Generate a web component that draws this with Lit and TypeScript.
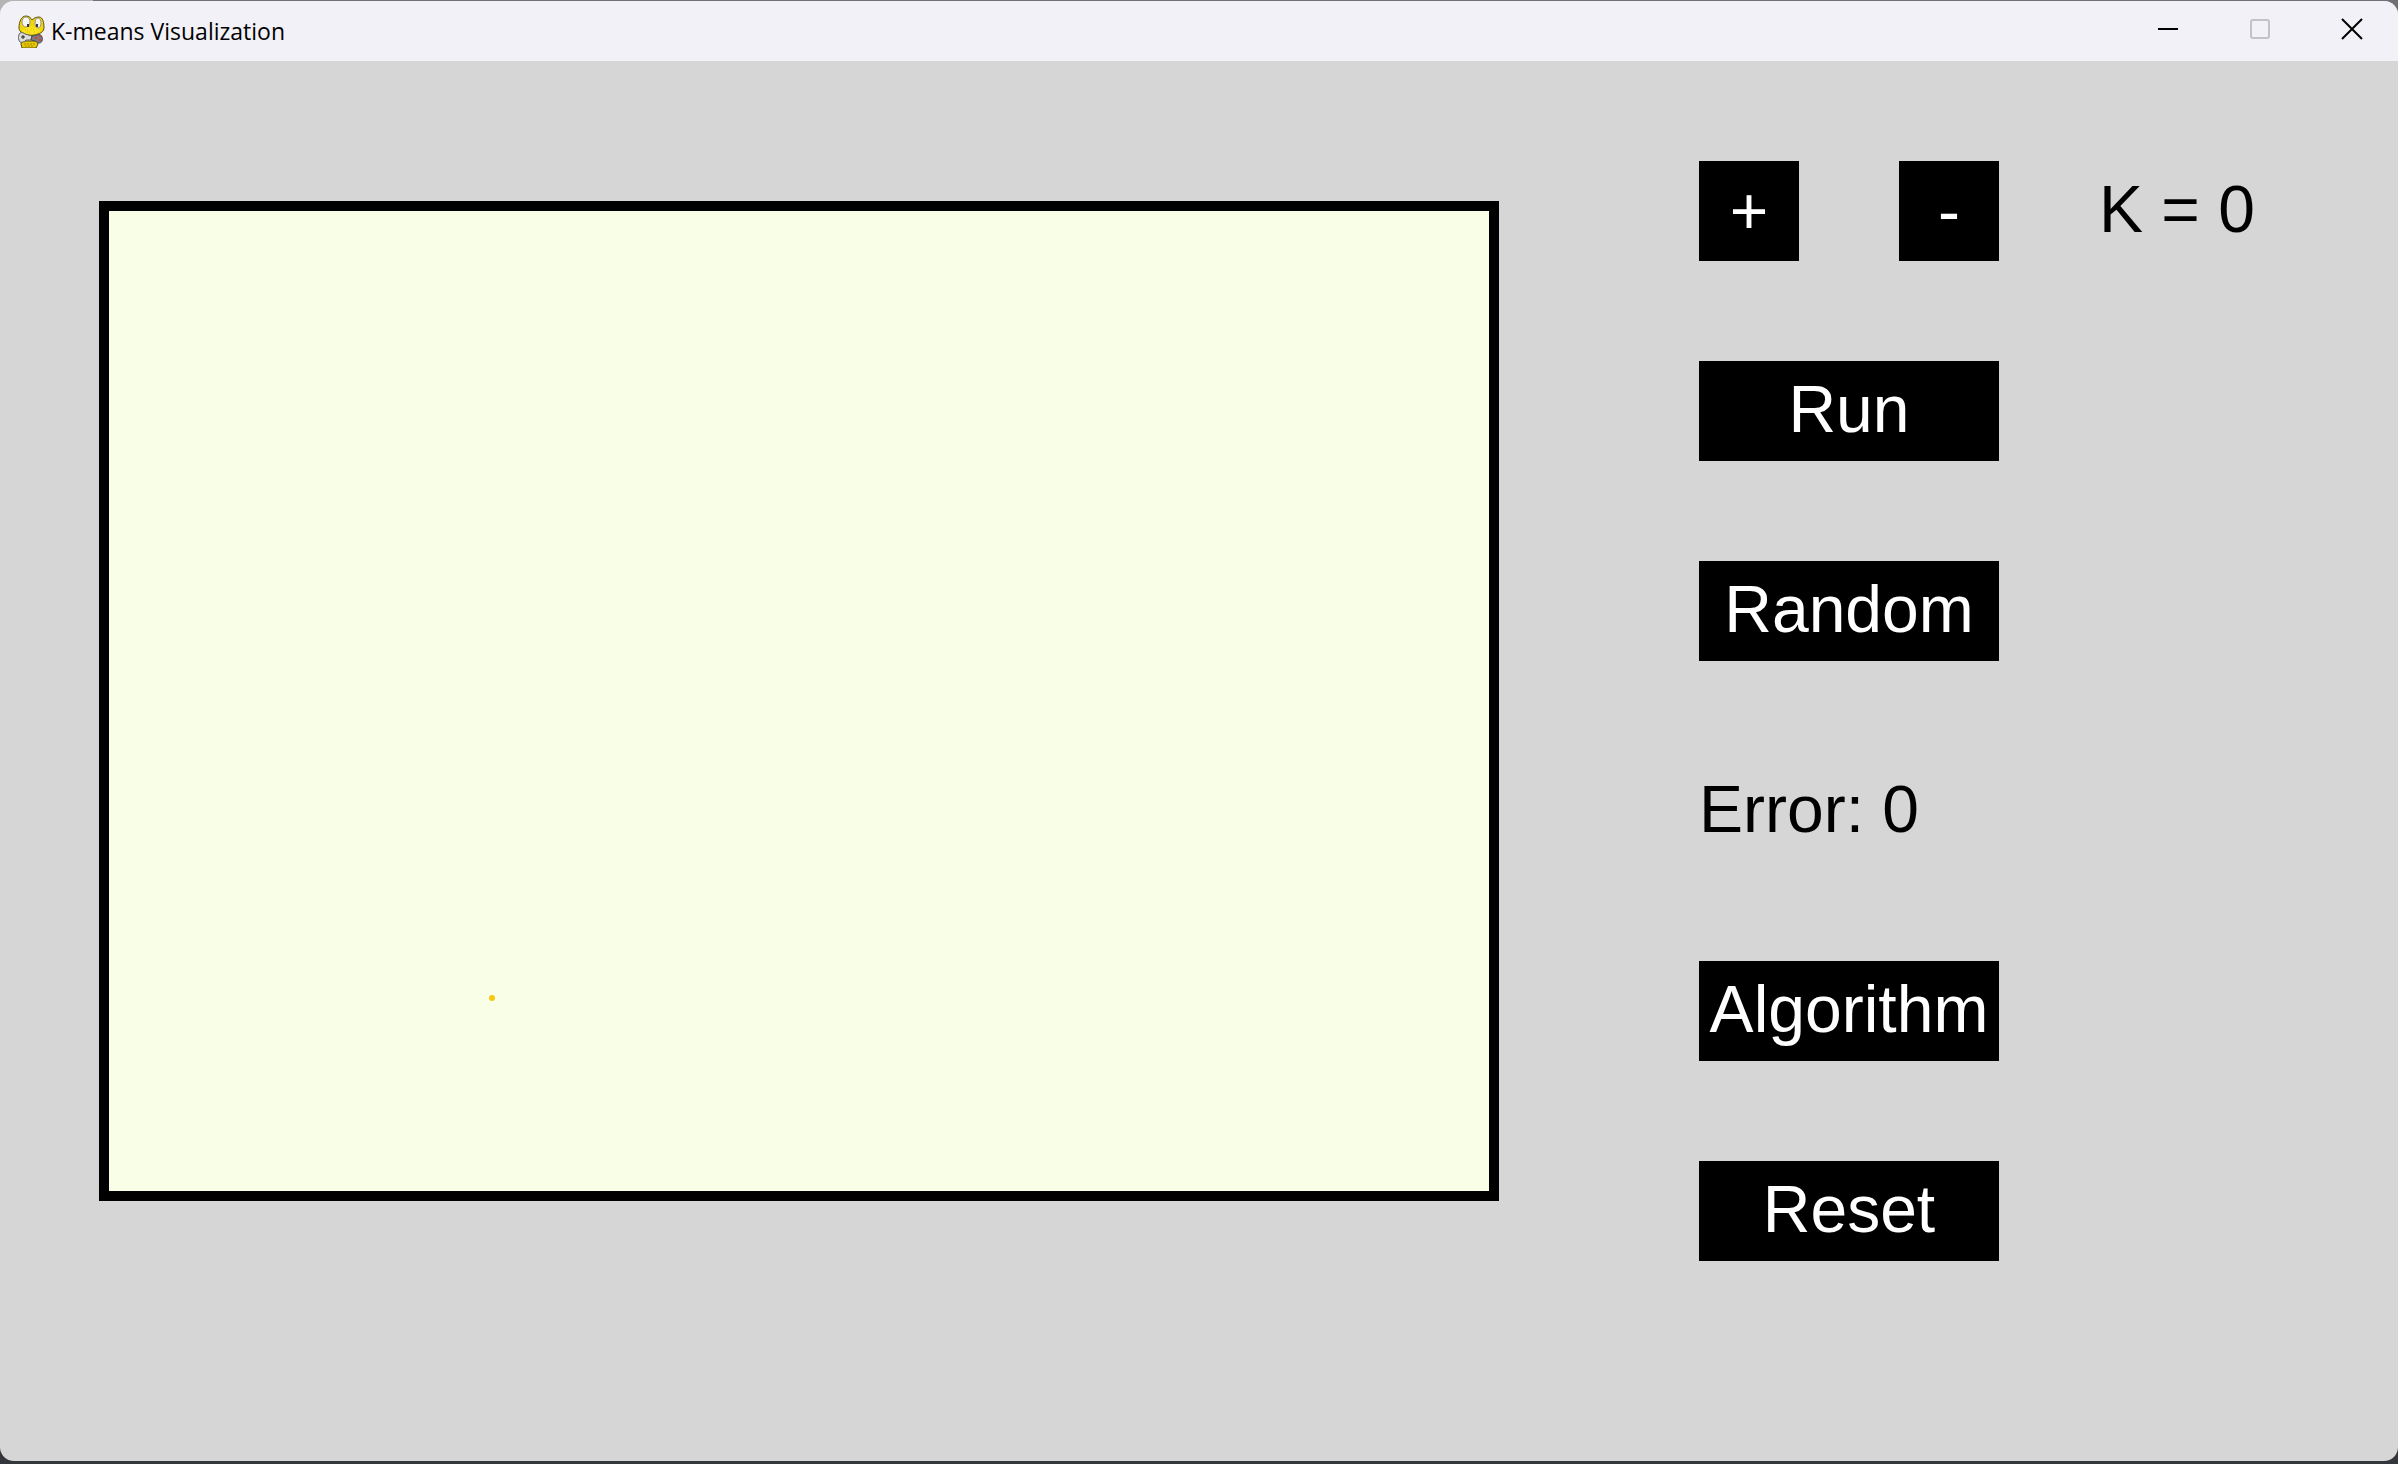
import { LitElement, html, css, svg } from "lit";
import { customElement, state } from "lit/decorators.js";

interface Point {
  x: number;
  y: number;
}

const mascot = svg`
  <path d="M5 26 L20 26 L21 29 L19 33 L5 33 L4 29 Z" fill="#e8c800" stroke="#5c5208" stroke-width="1"/>
  <path d="M7 29 H18 M8 31 H17" stroke="#a88a00" stroke-width="1" stroke-dasharray="2 1"/>
  <path d="M2 13 C2 7 4 1 9 1 C12 1 14 3 15 5 C17 3 19 2 22 2 C26 2 27 8 27 13 C27 16 24 18 22 19 C20 21 8 21 6 18 C3 17 2 15 2 13 Z" fill="#f0d610" stroke="#5c5208" stroke-width="1"/>
  <ellipse cx="9" cy="7" rx="4" ry="5" fill="#f6f6f2" stroke="#9a9478" stroke-width="1"/>
  <ellipse cx="21" cy="8" rx="3" ry="5" fill="#f6f6f2" stroke="#9a9478" stroke-width="1"/>
  <rect x="10" y="9" width="2" height="3" fill="#35354a"/>
  <rect x="19" y="9" width="2" height="3" fill="#35354a"/>
  <path d="M5 17 C6 13 10 12 14 12 C19 12 22 14 23 17 C20 21 8 21 5 17 Z" fill="#fae21c"/>
  <path d="M8 15 H11 M14 14 H17 M10 17 H13 M17 17 H19" stroke="#d8ba00" stroke-width="1" stroke-dasharray="1 1"/>
  <path d="M6 18 C9 21 19 21 22 18" fill="none" stroke="#857408" stroke-width="1"/>
  <path d="M3 18 C5 17 7 18 8 19 L15 21 L14 25 L9 25 C8 27 4 28 3 27 C1 25 1 20 3 18 Z" fill="#dcdcda" stroke="#606060" stroke-width="1"/>
  <path d="M4 22 H8 M6 20 V24" stroke="#222222" stroke-width="1"/>
  <path d="M15 21 L20 20 C22 19 25 20 25 22 C26 25 25 28 22 28 C20 28 19 26 18 26 L14 25 Z" fill="#7d7d80" stroke="#4c4c50" stroke-width="1"/>
  <path d="M18 23 H20 M22 25 H24 M22 21 H24" stroke="#d83a3a" stroke-width="2"/>
`;

@customElement("app-root")
export class AppRoot extends LitElement {
  @state() private k = 0;
  @state() private error = 0;
  @state() private points: Point[] = [{ x: 383, y: 787 }];

  static styles = css`
    :host {
      display: block;
    }
    .desktop {
      box-sizing: border-box;
      min-height: 100vh;
      display: flex;
      padding: 1px 0 3px;
      background:
        linear-gradient(#b4b4b4, #b4b4b4) 0 0 / 93px 60px no-repeat,
        linear-gradient(#6e7076, #6e7076 40px, #33363b 60px);
    }
    .window {
      flex: 1;
      min-width: 0;
      display: flex;
      flex-direction: column;
      border-radius: 14px;
      overflow: hidden;
      background: #d6d6d6;
      color: #000;
    }
    .titlebar {
      display: flex;
      align-items: center;
      height: 60px;
      background: #f2f1f7;
    }
    .mascot {
      width: 28px;
      height: 33px;
      margin-left: 17px;
    }
    .title {
      flex: 1;
      margin: 0 0 0 6px;
      font: 400 23px/32px "Open Sans", "Noto Sans", sans-serif;
    }
    .caption {
      display: flex;
      align-items: center;
      justify-content: center;
      width: 92px;
      height: 56px;
      padding: 0;
      border: 0;
      background: none;
      color: #000;
      align-self: flex-start;
    }
    .caption:disabled {
      color: #c4c2c8;
    }
    .glyph {
      width: 20px;
      height: 20px;
      overflow: visible;
      fill: none;
      stroke: currentColor;
      stroke-width: 2;
    }
    .content {
      flex: 1;
      display: flex;
      align-items: flex-start;
      gap: 200px;
      padding: 100px 99px;
      font: 400 66px/96px "Liberation Sans", Arial, sans-serif;
    }
    .plot {
      box-sizing: border-box;
      flex: 1;
      min-width: 0;
      margin-top: 40px;
      aspect-ratio: 7 / 5;
      border: 10px solid #000;
      background: #f9ffe6;
    }
    .points {
      display: block;
      width: 100%;
      height: 100%;
      fill: #f9c80e;
    }
    .controls {
      display: grid;
      grid-template-columns: 100px 100px 200px;
      grid-auto-rows: 100px;
      gap: 100px;
    }
    .button {
      display: block;
      padding: 0 0 4px;
      border: 0;
      border-radius: 0;
      background: #000;
      color: #fff;
      font: inherit;
      white-space: nowrap;
    }
    .step {
      padding: 0;
    }
    .wide {
      grid-column: 1 / 3;
    }
    .readout {
      white-space: nowrap;
    }
    .row {
      grid-column: 1 / -1;
    }
  `;

  private changeK(step: number) {
    this.k = Math.max(0, this.k + step);
  }

  private scatter() {
    this.points = Array.from({ length: 50 }, () => ({
      x: Math.round(Math.random() * 1380),
      y: Math.round(Math.random() * 980),
    }));
  }

  private reset() {
    this.k = 0;
    this.error = 0;
    this.points = [];
  }

  render() {
    return html`
      <div class="desktop">
        <div class="window">
          <header class="titlebar">
            <svg class="mascot" viewBox="0 0 28 33" aria-hidden="true">${mascot}</svg>
            <h1 class="title">K-means Visualization</h1>
            <button class="caption" aria-label="Minimize">
              <svg class="glyph" viewBox="0 0 20 20"><path d="M0 10 H20" /></svg>
            </button>
            <button class="caption" aria-label="Maximize" disabled>
              <svg class="glyph" viewBox="0 0 20 20"><rect x="1" y="1" width="18" height="18" rx="2" /></svg>
            </button>
            <button class="caption" aria-label="Close">
              <svg class="glyph" viewBox="0 0 20 20"><path d="M0 0 L20 20 M20 0 L0 20" /></svg>
            </button>
          </header>
          <main class="content">
            <div class="plot">
              <svg class="points" viewBox="0 0 1380 980" role="img" aria-label="Points">
                ${this.points.map((p) => svg`<circle cx=${p.x} cy=${p.y} r="3" />`)}
              </svg>
            </div>
            <div class="controls">
              <button class="button step" @click=${() => this.changeK(1)}>+</button>
              <button class="button step" @click=${() => this.changeK(-1)}>-</button>
              <output class="readout">K = ${this.k}</output>
              <button class="button wide">Run</button>
              <button class="button wide" @click=${this.scatter}>Random</button>
              <output class="readout row">Error: ${this.error}</output>
              <button class="button wide">Algorithm</button>
              <button class="button wide" @click=${this.reset}>Reset</button>
            </div>
          </main>
        </div>
      </div>
    `;
  }
}
